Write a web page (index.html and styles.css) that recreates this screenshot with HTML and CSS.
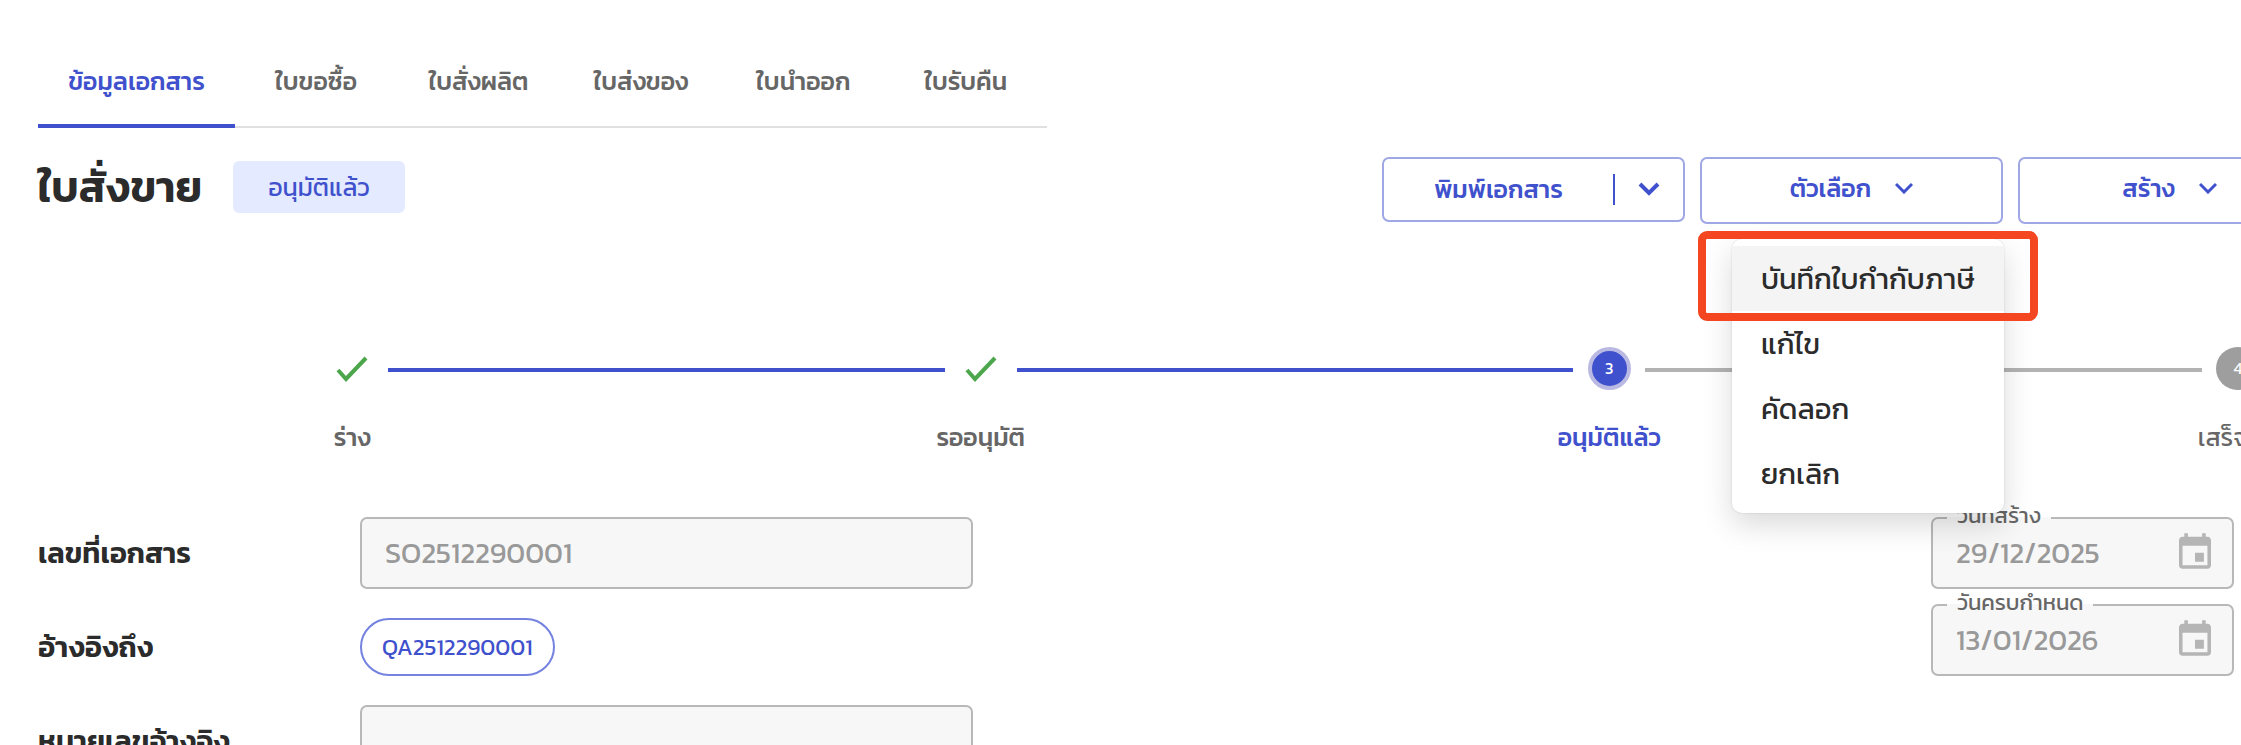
FILE: index.html
```
<!DOCTYPE html>
<html lang="th">
<head>
  <meta charset="UTF-8">
  <meta name="viewport" content="width=device-width, initial-scale=1.0">
  <title>ใบสั่งขาย</title>
  <link rel="stylesheet" href="styles.css">
</head>
<body>

  <div class="page">
    <nav class="tabs">
      <a href="#" class="tab active">ข้อมูลเอกสาร</a>
      <a href="#" class="tab">ใบขอซื้อ</a>
      <a href="#" class="tab">ใบสั่งผลิต</a>
      <a href="#" class="tab">ใบส่งของ</a>
      <a href="#" class="tab">ใบนำออก</a>
      <a href="#" class="tab">ใบรับคืน</a>
    </nav>

    <header class="header">
      <h1>ใบสั่งขาย</h1>
      <span class="status">อนุมัติแล้ว</span>

      <div class="actions">
        <div class="split-button">
          <button type="button" class="split-main">พิมพ์เอกสาร</button>
          <button type="button" class="split-arrow" aria-label="เพิ่มเติม">
            <svg width="22" height="14" viewBox="0 0 22 14"><path d="M2 2l9 9 9-9" /></svg>
          </button>
        </div>

        <div class="dropdown">
          <button type="button" class="button">ตัวเลือก
            <svg width="18" height="12" viewBox="0 0 18 12"><path d="M1 2l8 8 8-8" /></svg>
          </button>
          <div class="menu">
            <button type="button" class="menu-item selected">บันทึกใบกำกับภาษี</button>
            <button type="button" class="menu-item">แก้ไข</button>
            <button type="button" class="menu-item">คัดลอก</button>
            <button type="button" class="menu-item">ยกเลิก</button>
          </div>
          <div class="highlight"></div>
        </div>

        <button type="button" class="button">สร้าง
          <svg width="18" height="12" viewBox="0 0 18 12"><path d="M1 2l8 8 8-8" /></svg>
        </button>
      </div>
    </header>

    <ol class="stepper">
      <li class="step done">
        <div class="step-icon">
          <svg width="32" height="26" viewBox="0 0 32 26"><path d="M2 14l8 9L30 2" /></svg>
        </div>
        <span class="step-label">ร่าง</span>
      </li>
      <li class="step done">
        <div class="step-icon">
          <svg width="32" height="26" viewBox="0 0 32 26"><path d="M2 14l8 9L30 2" /></svg>
        </div>
        <span class="step-label">รออนุมัติ</span>
      </li>
      <li class="step current">
        <div class="step-icon"><span class="step-number">3</span></div>
        <span class="step-label">อนุมัติแล้ว</span>
      </li>
      <li class="step">
        <div class="step-icon"><span class="step-number">4</span></div>
        <span class="step-label">เสร็จสิ้น</span>
      </li>
    </ol>

    <form class="form">
      <div class="fields">
        <label for="doc-number">เลขที่เอกสาร</label>
        <input type="text" id="doc-number" class="input" value="SO2512290001" disabled>

        <span class="field-name">อ้างอิงถึง</span>
        <a href="#" class="chip">QA2512290001</a>

        <label for="ref-number">หมายเลขอ้างอิง</label>
        <input type="text" id="ref-number" class="input" disabled>
      </div>

      <div class="dates">
        <div class="date-field">
          <label for="created">วันที่สร้าง</label>
          <input type="text" id="created" class="input" value="29/12/2025" disabled>
          <svg width="32" height="36" viewBox="3 1 18 20"><path d="M17 12h-5v5h5v-5zM16 1v2H8V1H6v2H5c-1.110 0-1.990.9-1.990 2L3 19c0 1.100.89 2 2 2h14c1.100 0 2-.9 2-2V5c0-1.100-.9-2-2-2h-1V1h-2zm3 18H5V8h14v11z" /></svg>
        </div>
        <div class="date-field">
          <label for="due">วันครบกำหนด</label>
          <input type="text" id="due" class="input" value="13/01/2026" disabled>
          <svg width="32" height="36" viewBox="3 1 18 20"><path d="M17 12h-5v5h5v-5zM16 1v2H8V1H6v2H5c-1.110 0-1.990.9-1.990 2L3 19c0 1.100.89 2 2 2h14c1.100 0 2-.9 2-2V5c0-1.100-.9-2-2-2h-1V1h-2zm3 18H5V8h14v11z" /></svg>
        </div>
      </div>
    </form>
  </div>

</body>
</html>
```
FILE: styles.css
```
* {
  box-sizing: border-box;
}

html {
  overflow: hidden;
}

body {
  margin: 0;
  background-color: #FFF;
  color: #2B2B2B;
  font-family: Kanit, Prompt, "Noto Sans Thai", "Open Sans", sans-serif;
  font-size: 25px;
  line-height: 32px;
}

button, input {
  font-family: inherit;
}

svg {
  fill: none;
  stroke: currentColor;
  stroke-width: 3px;
}

/* the stepper runs past the right side of the window */
.page {
  width: calc(100% + 311px);
  padding: 38px 0 0 38px;
}

.tabs {
  display: flex;
  width: 1009px;
  height: 90px;
  border-bottom: 2px solid #E0E0E0;
}

.tab {
  display: flex;
  flex: 1;
  align-items: center;
  justify-content: center;
  margin-bottom: -2px;
  border-bottom: 4px solid transparent;
  color: #666;
  font-weight: 500;
  text-decoration: none;
}

.tab.active {
  flex: none;
  width: 197px;
  border-color: #3F51CC;
  color: #3F51CC;
}

.header {
  display: flex;
  align-items: flex-start;
  padding: 29px 231px 0 0;
}

h1 {
  margin: 0;
  width: 195px;
  font-size: 43px;
  font-weight: 600;
  line-height: 60px;
  white-space: nowrap;
}

.status {
  width: 172px;
  margin-top: 4px;
  border-radius: 6px;
  background-color: #E4EAFF;
  color: #3F51CC;
  line-height: 52px;
  text-align: center;
}

.actions {
  display: flex;
  gap: 15px;
  margin-left: auto;
}

.button, .split-button {
  display: flex;
  align-items: center;
  justify-content: center;
  width: 303px;
  height: 67px;
  padding: 0 0 5px;
  border: 2px solid #9FA7E5;
  border-radius: 7px;
  background-color: #FFF;
  color: #3F51CC;
  font-size: 25px;
  font-weight: 500;
}

.button svg {
  margin-left: 24px;
}

.split-button {
  height: 65px;
  padding: 0;
}

.split-main, .split-arrow {
  display: flex;
  align-items: center;
  justify-content: center;
  height: 31px;
  padding: 0 0 2px;
  border: none;
  background: none;
  color: #3F51CC;
  font-size: 25px;
  font-weight: 500;
  line-height: 28px;
}

.split-main {
  flex: 1;
}

.split-arrow {
  width: 70px;
  border-left: 2px solid #3F51CC;
}

.split-arrow svg {
  stroke-width: 4px;
}

.dropdown {
  position: relative;
}

.menu {
  position: absolute;
  z-index: 1;
  top: 82px;
  right: -1px;
  width: 272px;
  padding: 7px 0;
  border-radius: 10px;
  background-color: #FFF;
  box-shadow: 0 12px 30px rgba(0, 0, 0, 0.15), 0 0 2px rgba(0, 0, 0, 0.15);
}

.menu-item {
  display: block;
  width: 100%;
  height: 65px;
  padding: 0 29px;
  border: none;
  background: none;
  color: #2B2B2B;
  font-size: 29px;
  text-align: left;
  white-space: nowrap;
}

.menu-item.selected {
  background-color: #F4F4F4;
}

.highlight {
  position: absolute;
  z-index: 2;
  top: 74px;
  left: -2px;
  width: 340px;
  height: 90px;
  border: 8px solid #F44620;
  border-radius: 9px;
}

.stepper {
  display: flex;
  margin: 0;
  padding: 123px 0 0;
  list-style: none;
}

.step {
  position: relative;
  flex: 1;
  color: #666;
  text-align: center;
}

/* connector to the previous step */
.step + .step::before {
  content: "";
  position: absolute;
  top: 21px;
  right: calc(50% + 36px);
  left: calc(-50% + 36px);
  height: 4px;
  background-color: #B3B3B3;
}

.step.done + .step::before {
  background-color: #3F51CC;
}

.step-icon {
  display: flex;
  align-items: center;
  justify-content: center;
  height: 43px;
}

.step-icon svg {
  color: #4CA64C;
  stroke-width: 4px;
}

.step-number {
  width: 43px;
  border-radius: 50%;
  background-color: #9E9E9E;
  color: #FFF;
  font-size: 16px;
  line-height: 43px;
}

.current .step-number {
  border: 4px solid #B9B9E3;
  background-color: #3F51CC;
  line-height: 35px;
}

.step-label {
  display: block;
  margin-top: 31px;
}

.done .step-label, .current .step-label {
  font-weight: 500;
}

.current .step-label {
  color: #3F51CC;
}

.form {
  display: flex;
  align-items: flex-start;
  justify-content: space-between;
  padding: 64px 318px 0 0;
}

.fields {
  display: grid;
  grid-template-columns: 322px 613px;
  row-gap: 29px;
  align-items: center;
}

.fields label, .field-name {
  font-size: 29px;
  font-weight: 600;
}

.input {
  width: 100%;
  height: 72px;
  padding: 0 23px 2px;
  border: 2px solid #B8B8B8;
  border-radius: 7px;
  background-color: #F7F7F7;
  color: #999;
  font-size: 29px;
}

.chip {
  justify-self: start;
  padding: 0 20px;
  border: 2px solid #7482E0;
  border-radius: 29px;
  color: #3F51CC;
  font-size: 23px;
  line-height: 54px;
  text-decoration: none;
}

.dates {
  display: flex;
  flex-direction: column;
  gap: 15px;
  width: 303px;
}

.date-field {
  position: relative;
}

.date-field label {
  position: absolute;
  top: -15px;
  left: 16px;
  padding: 0 10px;
  background: linear-gradient(#FFF 15px, #F7F7F7 15px);
  color: #666;
  font-size: 22px;
  line-height: 28px;
}

.date-field svg {
  position: absolute;
  top: 16px;
  right: 23px;
  fill: #B5B5B5;
  stroke: none;
}
```
